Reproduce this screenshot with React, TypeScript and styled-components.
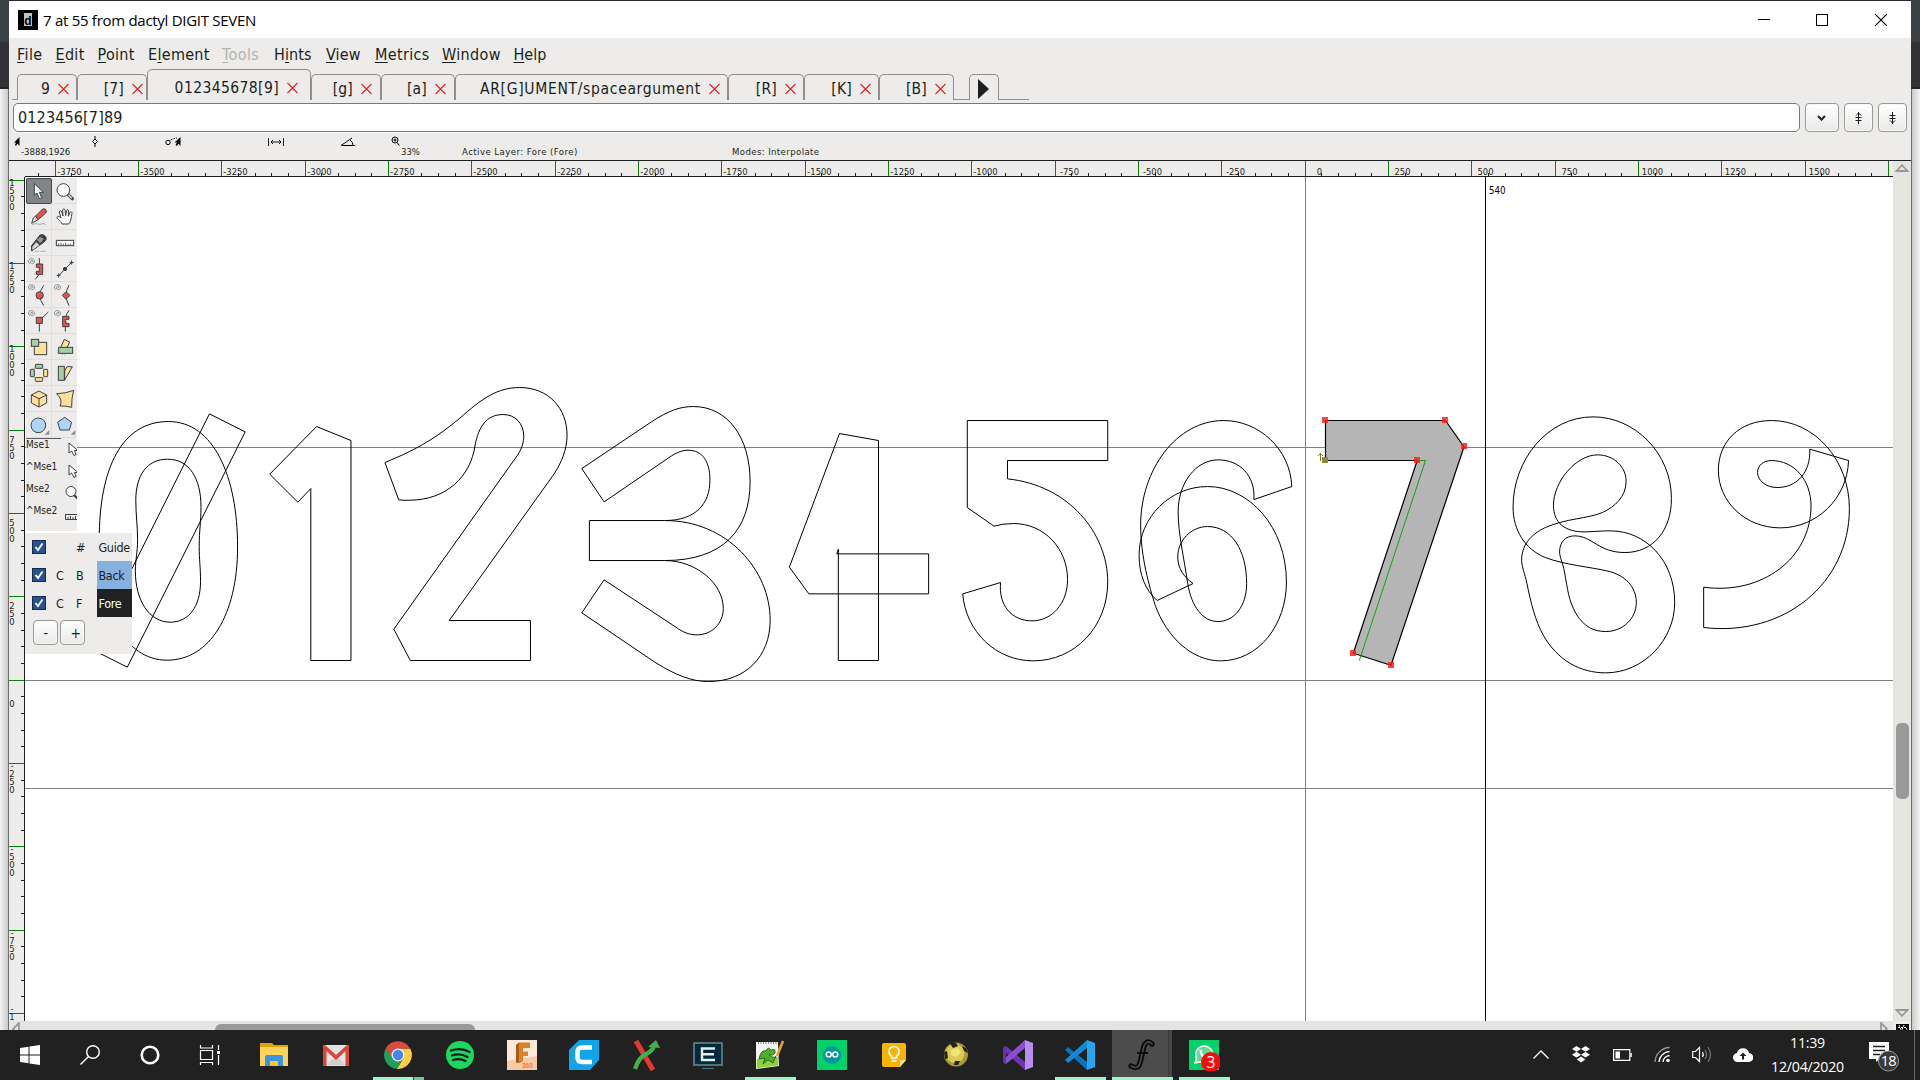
import React from "react";
import styled, { createGlobalStyle, css } from "styled-components";

const UI = `"DejaVu Sans Condensed", "DejaVu Sans", sans-serif`;
const SEGOE = `"Open Sans", "Noto Sans", sans-serif`;

const Global = createGlobalStyle`
  * { box-sizing: border-box; }
  body { margin: 0; background: #202020; overflow: hidden; }
  svg { display: block; flex: none; }
`;

const Screen = styled.div`
  width: 1920px; height: 1080px; display: flex; flex-direction: column;
  font-family: ${UI}; font-stretch: condensed; color: #1c1f20; overflow: hidden;
`;
const Desktop = styled.div`
  height: 1030px; display: grid; grid-template-columns: 9px 1902px 9px;
`;
const Behind = styled.div<{ $side: "left" | "right" }>`
  background:
    linear-gradient(#3b4043 0 42px, #323236 42px 87px, #252529 87px 89px, transparent 89px),
    linear-gradient(to ${(p) => p.$side}, #6d6d6d 0 1px, #c9c9c9 1px, #efefef 8px);
`;
const Window = styled.div`
  display: flex; flex-direction: column; background: #edecea; border-top: 1px solid #2b2b2f; min-width: 0;
`;
const TitleBar = styled.div`
  height: 37px; flex: none; background: #fff; display: flex; align-items: center; padding-left: 9px;
`;
const TitleText = styled.div`
  flex: 1; font: 15px ${SEGOE}; font-stretch: normal; letter-spacing: -0.28px; color: #000; padding-left: 5px; white-space: pre;
`;
const WinButton = styled.div<{ $w: number }>`
  width: ${(p) => p.$w}px; height: 37px; display: flex; align-items: center; justify-content: center;
`;
const MenuBar = styled.div`
  height: 31px; flex: none; display: grid; padding-left: 8px; align-items: center;
  grid-template-columns: 38.5px 42px 50.5px 74px 52px 52px 49px 67px 71.5px 50px;
  font-size: 16px;
`;
const MenuItem = styled.div<{ $ls: number; $off?: boolean }>`
  letter-spacing: ${(p) => p.$ls}px; color: ${(p) => (p.$off ? "#b3b3b1" : "#1c1f20")}; white-space: nowrap; line-height: 20px;
  padding-top: 2px;
  u { text-underline-offset: 2px; text-decoration-thickness: 1px; }
`;
const TabStrip = styled.div`
  height: 31px; flex: none; display: flex; align-items: flex-end; padding-left: 3px;
`;
const Baseline = styled.div<{ $w: number }>`
  width: ${(p) => p.$w}px; height: 1px; background: #8f8f8b;
`;
const Tab = styled.div<{ $w: number; $active?: boolean; $pad?: number }>`
  width: ${(p) => p.$w}px; height: ${(p) => (p.$active ? 31 : 26)}px;
  display: flex; align-items: center; justify-content: flex-end; gap: 8px;
  padding: ${(p) => (p.$active ? 6 : 2)}px ${(p) => p.$pad ?? 7}px 0 0;
  border: 1px solid #8f8f8b; border-bottom: 0; border-radius: 5px 5px 0 0;
  font-size: 15.5px; white-space: nowrap;
`;
const TabLabel = styled.span<{ $ls?: number }>`letter-spacing: ${(p) => p.$ls ?? 0.2}px;`;
const EntryRow = styled.div`
  height: 35px; flex: none; display: flex; align-items: flex-start; padding: 3px 0 0 4px;
`;
const Entry = styled.div`
  width: 1787px; height: 29px; background: #fff; border: 1px solid #76787a; border-radius: 5px;
  padding: 0 0 1px 4px; font-size: 16px; letter-spacing: .14px; line-height: 27px; box-shadow: 0 1px 0 #fbfbfa;
`;
const bevel = css`
  border: 1px solid #9a9a97; border-radius: 4px; background: linear-gradient(#ffffff, #e9e9e8);
  box-shadow: inset 0 0 0 1px #f8f8f8;
  display: flex; align-items: center; justify-content: center;
`;
const EntryButton = styled.div<{ $w: number }>`
  ${bevel} width: ${(p) => p.$w}px; height: 29px; margin-left: 5px; padding-right: 1px;
`;
const InfoBar = styled.div`
  height: 25px; flex: none; display: grid; align-items: start;
  grid-template-columns: 79px 73px 103px 72px 51px 71px 270px 1fr;
  padding-left: 4px; font-size: 9.5px;
`;
const InfoCell = styled.div<{ $x?: number; $ls?: number }>`
  height: 25px; display: flex; align-items: flex-start;
  letter-spacing: ${(p) => p.$ls ?? 0}px; white-space: nowrap;
  span { margin-left: ${(p) => p.$x ?? 0}px; padding-top: 11px; line-height: 12px; }
`;
const Work = styled.div`
  flex: 1; min-height: 0; display: grid; grid-template-columns: 1884px 18px; grid-template-rows: 861px 9px;
`;
const Editor = styled.div`
  display: grid; grid-template-columns: 16px 1868px; grid-template-rows: 17px 844px; position: relative;
`;
const TopRuler = styled.div`grid-column: 1 / 3;`;
const CanvasArea = styled.div`background: #fff;`;
const VScroll = styled.div`
  background: #e4e4e0; display: flex; flex-direction: column; align-items: center; padding: 3px 0 3px;
  border-top: 1px solid #1c1f20;
`;
const Spacer = styled.div<{ $h: number }>`height: ${(p) => p.$h}px; flex: none;`;
const VThumb = styled.div`width: 13px; height: 76px; border-radius: 5px; background: #999a97; flex: none;`;
const HScroll = styled.div`
  background: #e4e4e0; display: flex; justify-content: space-between; overflow: hidden; padding: 1px 5px 0 3px;
`;
const HThumb = styled.div`
  width: 260px; height: 15px; border-radius: 6px; background: #999a97; margin: 2px auto 0 195px;
`;
const Corner = styled.div`display: flex; justify-content: center; padding-top: 3px; overflow: hidden;`;

const Toolbox = styled.div`
  position: absolute; left: 17px; top: 18px; width: 51px; height: 353px; background: #edecea; overflow: hidden;
`;
const ToolGrid = styled.div`
  display: grid; grid-template-columns: 26px 26px; grid-auto-rows: 26px; width: 52px;
`;
const ToolCell = styled.div<{ $on?: boolean }>`
  border-right: 1px solid #dededc; border-bottom: 1px solid #dededc;
  ${(p) => p.$on && css`background: #808588; border: 1px solid #45494b; border-radius: 2px;`}
  svg { margin: ${(p) => (p.$on ? "-1px" : "0")}; }
`;
const Rule = styled.div`width: 35px; height: 1px; background: #5b5e60;`;
const MouseRow = styled.div`
  height: 22px; display: flex; justify-content: space-between; font-size: 10px; line-height: 12px;
  svg { margin: 3px 0 0; }
`;
const Layers = styled.div`
  position: absolute; left: 16px; top: 373px; width: 107px; height: 121px; background: #edecea;
  font-size: 12.5px; letter-spacing: -0.35px;
`;
const LayerRow = styled.div`
  height: 28px; display: grid; grid-template-columns: 7px 24px 20px 21px 35px; align-items: center; line-height: 17px;
  span { padding-top: 1px; }
`;
const Check = styled.div`
  width: 14px; height: 14px; background: #28518f; border: 1px solid #142c50;
`;
const LayerName = styled.div<{ $bg: string; $fg: string }>`
  height: 28px; line-height: 29px; padding-left: 1.5px; background: ${(p) => p.$bg}; color: ${(p) => p.$fg};
`;
const LayerButtons = styled.div`display: flex; gap: 2px; padding: 3px 0 0 8px;`;
const SmallButton = styled.div<{ $dx?: number }>`${bevel} width: 25px; height: 25px; font-size: 14px; padding-left: ${(p) => p.$dx ?? 0}px;`;

const Taskbar = styled.div`
  height: 50px; background: #212121; display: flex; font-family: ${SEGOE}; font-stretch: normal; color: #fff;
`;
const Slot = styled.div<{ $w: number }>`
  width: ${(p) => p.$w}px; height: 50px; flex: none; display: grid; place-items: center; grid-template-rows: 49px;
`;
const AppSlot = styled.div<{ $state?: "open" | "group" | "active" }>`
  width: 62px; height: 50px; flex: none; display: grid; grid-template-rows: 47px 3px; justify-items: center;
  background: ${(p) =>
    p.$state === "active"
      ? "linear-gradient(90deg, transparent 1px, #4c4c4c 1px 57px, #3a3a3a 57px 58px, #474747 58px 61px, transparent 61px)"
      : "none"};
  & > svg { margin-top: 9px; }
  &::after {
    content: ""; height: 3px; width: ${(p) => (p.$state === "active" ? 61 : 51)}px;
    background: ${(p) =>
      !p.$state ? "none" : p.$state === "group" ? "linear-gradient(90deg, #9ff5cb 40px, #2f5a46 40px 41px, #7fbf9f 41px)" : "#9ff5cb"};
  }
`;
const Tray = styled.div`margin-left: auto; display: flex; height: 50px;`;
const Clock = styled.div`
  width: 92px; display: flex; flex-direction: column; align-items: center; font-size: 14.2px; line-height: 24px;
  letter-spacing: -0.25px; padding: 1px 0 0 7px; white-space: nowrap;
`;
const ShowDesktop = styled.div`width: 6px; border-left: 1px solid #6a6a6a;`;

/* ---------- rulers ---------- */
const SCALE = 1 / 3;
const ORIGIN_X = 1305.3;
const ORIGIN_Y = 680.3;

function HorizontalRuler() {
  const out: React.ReactNode[] = [];
  for (let u = -3850; u <= 1750; u += 50) {
    const x = Math.floor(ORIGIN_X + u * SCALE) + 0.5;
    if (x < 25 || x > 1893) continue;
    const major = u % 250 === 0;
    out.push(<line key={u} x1={x} x2={x} y1={major ? 161 : 173} y2={176} stroke={major ? "#0a820a" : "#1c1f20"} />);
    if (major && u < 1750)
      out.push(
        <text key={"t" + u} x={x + 14} y={175} textAnchor="middle" fontSize="9.3" fill="#1c1f20">{u}</text>
      );
  }
  return (
    <svg width="1884" height="17" viewBox="9 160 1884 17">
      <path d="M9 160.5H1893M25 176.5H1893" stroke="#1c1f20" />
      {out}
    </svg>
  );
}

function VerticalRuler() {
  const out: React.ReactNode[] = [];
  for (let u = 1500; u >= -1000; u -= 50) {
    const y = Math.floor(ORIGIN_Y - u * SCALE) + 0.5;
    const major = u % 250 === 0;
    out.push(<line key={u} x1={major ? 9 : 21} x2={24} y1={y} y2={y} stroke={major ? "#0a820a" : "#1c1f20"} />);
    if (major) {
      const chars = String(u).split("");
      const first = y + 2 + (4 - chars.length) * 7;
      chars.forEach((c, i) => {
        const baseline = first + i * 8 + 3.3;
        if (baseline > 1021) return;
        out.push(
          <text key={u + "-" + i} x={12} y={baseline} textAnchor="middle" fontSize="9.4" fill="#1c1f20">{c}</text>
        );
      });
    }
  }
  return (
    <svg width="16" height="844" viewBox="9 177 16 844">
      {out}
      <path d="M24.5 177V1021" stroke="#1c1f20" />
    </svg>
  );
}

/* ---------- glyph outlines ---------- */
const GROUPS = [
  {
    at: "translate(80 370.2) scale(.44643 .33333)",
    paths: [
      "M198 154C300 154 353 320 353 530C353 735 290 870 195 870C100 870 43 720 43 510C43 290 95 154 198 154Z",
      "M196 267C245 267 271 325 271 410C271 460 267 480 267 528C267 570 270 590 270 633C270 710 243 756 202 756C155 756 124 690 124 603C124 565 129 550 129 508C129 465 125 435 125 390C125 315 150 267 196 267Z",
      "M290 131L370 185L106 891L26 837Z",
      "M530 169L607 211V871H517V355L488 396L425 312Z",
      "M683 277C760 235 800 200 850 145C900 85 935 52 985 52C1050 52 1091 115 1091 195C1091 235 1080 275 1060 315L827 751H1009V871H740L703 777L980 255C990 235 994 215 994 198C994 160 975 133 948 133C910 133 893 170 885 225C875 320 820 390 738 390Q725 391 714 389Z",
      "M1124 295L1280 155C1320 120 1345 109 1374 109C1450 109 1501 200 1501 335C1501 480 1440 571 1310 571H1141V451H1310C1380 451 1411 400 1411 330C1411 275 1395 240 1362 240C1350 240 1340 245 1325 257L1174 395Z",
      "M1310 451C1450 451 1546 600 1546 750C1546 860 1490 934 1408 934C1370 934 1335 915 1290 878L1124 728L1174 629L1335 771C1350 786 1365 794 1382 794C1415 794 1441 760 1441 715C1441 640 1380 571 1310 571",
    ],
  },
  {
    at: "translate(740 370.2) scale(.38265 .33333)",
    paths: [
      "M260 190L362 211V871H257V537L253 551H493V671H180L129 591Z",
      "M594 151H961V271H699V326C860 345 961 490 961 635C961 770 875 872 766 872C670 872 590 785 582 671L681 637C675 705 710 752 763 752C815 752 856 700 856 628C856 535 795 460 715 460Q685 460 664 468L594 412Z",
      "M1442 349C1438 235 1355 151 1264 151C1140 151 1047 300 1047 465C1047 560 1070 650 1085 705C1115 800 1180 872 1256 872C1355 872 1428 765 1428 635C1428 470 1330 349 1222 349C1125 349 1043 440 1043 555C1043 615 1060 660 1090 691L1184 640C1160 620 1144 595 1144 560C1144 510 1180 469 1222 469C1285 469 1324 540 1324 640C1324 710 1290 754 1249 754C1210 754 1180 710 1170 640C1160 560 1145 490 1145 425C1145 340 1190 269 1250 269C1305 269 1347 315 1343 388Z",
    ],
  },
  {
    at: "translate(1280 370.2) scale(.40816 .33333)",
    paths: [
      "M767 140C870 140 959 250 959 385C959 480 915 547 845 547C780 547 765 497 722 497C700 497 685 515 685 545C685 560 692 575 697 605C705 660 707 690 725 730C745 770 768 784 798 784C840 784 873 745 873 697C873 650 845 613 800 602C760 590 700 585 650 562C600 537 571 480 571 410C571 270 655 140 767 140Z",
      "M778 254C818 254 848 290 848 333C848 380 820 410 790 427C755 445 700 445 650 472C610 495 592 530 592 570C592 590 600 610 605 640C615 700 625 750 645 795C680 870 735 908 798 908C890 908 967 810 967 697C967 570 895 482 810 482C780 482 765 485 745 485C700 485 670 460 670 405C670 335 725 254 778 254Z",
      "M1038 651C1180 675 1301 565 1301 407C1301 330 1260 271 1204 271C1183 271 1170 287 1170 307C1170 330 1190 352 1218 352C1265 352 1300 310 1298 237L1393 271C1390 385 1315 473 1226 473C1140 473 1074 395 1074 300C1074 215 1125 151 1204 151C1310 151 1395 270 1395 415C1395 640 1235 800 1038 772Z",
    ],
  },
];
const POINTS = [[1325, 420], [1445, 420], [1464, 446], [1417, 460], [1353, 653], [1391, 665]];

function Outlines() {
  return (
    <svg width="1868" height="844" viewBox="25 177 1868 844">
      <path d="M25 447.5H1893M25 680.5H1893M25 788.5H1893M1305.5 177V1021" stroke="#808080" />
      <path d="M1485.5 177V1021" stroke="#000" />
      <text x="1489" y="194" fontSize="9.6" fill="#000">540</text>
      {GROUPS.map((g) => (
        <g key={g.at} transform={g.at} fill="none" stroke="#000">
          {g.paths.map((d) => <path key={d} d={d} vectorEffect="non-scaling-stroke" strokeWidth="1" />)}
        </g>
      ))}
      <path d="M1325.5 420.5H1445.5L1464 446.8L1391 665.2L1353.3 653.2L1417.2 460.5H1325.5Z" fill="#b5b5b5" stroke="#000" strokeWidth="1.2" />
      <path d="M1417 460.5H1425.5L1359.3 660.5" fill="none" stroke="#12a012" />
      {POINTS.map(([x, y]) => <rect key={x + "," + y} x={x - 3} y={y - 3} width="6" height="6" fill="#ff1a1a" fillOpacity=".82" />)}
      <rect x="1322" y="457" width="6" height="6" fill="#8c8c3c" />
      <path d="M1320.5 461V453.5M1318 456L1320.5 453.5L1323 456" fill="none" stroke="#80801a" />
    </svg>
  );
}

/* ---------- tool icons, drawn on a 78 unit cell ---------- */
const INK = "#3d4143";
const RED = "#e25252";
const GREEN = "#a6cfa3";
const YELLOW = "#ffe09a";
const BLUE = "#aed5f7";
const Spiral = () => <path d="M11 23C4 17 8 7 17 8C27 9 29 21 20 23C11 24 11 13 18 13C23 14 21 19 17 18" fill="none" stroke="#7d8284" strokeWidth="2.6" />;
const More = () => <path d="M70 54V68H56Z" fill="#8a8f91" stroke="none" />;

const TOOLS: React.ReactNode[] = [
  <path d="M25 17V52L33 45L40 62L47 59L40 43H52Z" fill="#fff" />,
  <><path d="M48 49L61 62" stroke={INK} strokeWidth="10" strokeLinecap="round" /><path d="M49 50L60 61" stroke="#c5cac7" strokeWidth="5" /><circle cx="34" cy="36" r="19" fill="#fff" /></>,
  <><path d="M29 36L50 15Q58 12 61 20Q62 24 59 27L36 47Z" fill={RED} /><path d="M29 36L36 47L17 58L22 42Z" fill="#dcdedc" /><path d="M18 64C25 54 40 64 46 60C53 57 58 60 60 64" fill="none" stroke="#858a8c" strokeWidth="2" /></>,
  <path d="M30 60C26 48 13 45 15 39C18 34 25 40 27 42L22 24C22 19 28 19 29 24L33 36L32 18C33 14 38 14 39 18L41 35L44 19C46 15 50 17 50 21L49 37L54 25C57 22 61 24 60 28C57 40 58 52 50 60Z" fill="#fff" />,
  <><path d="M17 63L16 48L42 15Q54 10 60 22Q62 30 57 34Z" fill="#3b4042" /><path d="M19 60L19 50L31 36L40 46Z" fill="#d6d8d7" stroke="none" /><path d="M34 29L44 22L52 28L42 38Z" fill="#8e9496" stroke="#fff" strokeWidth="2" strokeDasharray="3 3" /><path d="M28 64H38M43 64H60" stroke="#858a8c" strokeWidth="2" /></>,
  <><rect x="13" y="31" width="52" height="16" fill="#fff" /><path d="M20 46V41M27 46V38M34 46V41M41 46V38M48 46V41M55 46V41" strokeWidth="2.5" /></>,
  <><Spiral /><path d="M40 6V26M38 57L28 70" /><path d="M31 24H50V55H31V46H40V34H31Z" fill={RED} /></>,
  <><path d="M20 59L59 19M14 58H26M20 52V65M53 20H65M59 13V26" /><circle cx="39" cy="39" r="5" fill={INK} /></>,
  <><Spiral /><path d="M53 10Q41 28 41 40Q42 55 53 71" fill="none" /><circle cx="41" cy="40" r="11" fill={RED} /></>,
  <><Spiral /><path d="M51 10Q42 25 42 40Q42 55 51 71" fill="none" /><path d="M42 29L54 40L42 52L31 40Z" fill={RED} /></>,
  <><Spiral /><path d="M48 30L67 12M40 46V71" /><rect x="31" y="28" width="18" height="18" fill={RED} /></>,
  <><Spiral /><path d="M51 7Q44 16 42 25M40 56V71" fill="none" /><path d="M32 25H51V34H41V46H51V56H32Z" fill={RED} /></>,
  <><rect x="25" y="25" width="37" height="37" fill={YELLOW} /><rect x="16" y="16" width="22" height="21" fill={GREEN} /></>,
  <><path d="M37 16L53 24L45 41H26Z" fill={YELLOW} /><rect x="20" y="40" width="42" height="18" fill={GREEN} /><path d="M22 38Q15 50 17 60M30 61L40 64" fill="none" strokeWidth="2" strokeDasharray="3 3" stroke="#858a8c" /></>,
  <><circle cx="39" cy="39" r="19" fill="none" strokeWidth="2" strokeDasharray="3 3" /><rect x="28" y="13" width="22" height="12" fill={GREEN} rx="2" /><rect x="13" y="28" width="12" height="22" fill={GREEN} rx="2" /><rect x="53" y="28" width="12" height="22" fill={YELLOW} rx="2" /><rect x="28" y="53" width="22" height="11" fill={YELLOW} rx="2" /></>,
  <><path d="M45 20H61L38 60V33Z" fill={YELLOW} /><rect x="19" y="19" width="18" height="42" fill={GREEN} /></>,
  <><path d="M39 15L62 27V51L39 63L16 51V27Z" fill={YELLOW} /><path d="M16 27L39 38L62 27M39 38V63" fill="none" /></>,
  <path d="M14 23Q40 23 65 13Q58 38 59 64Q40 59 24 60Q34 42 14 23Z" fill={YELLOW} />,
  <><circle cx="37" cy="40" r="22" fill={BLUE} /><More /></>,
  <><path d="M38 16L59 31L52 54H24L17 31Z" fill={BLUE} /><More /></>,
];

const MiniArrow = () => (
  <svg width="9" height="15" viewBox="0 0 9 15"><path d="M1 1V11L3.5 9L6 13.5L8 12.5L6.5 8.5H10Z" fill="#fff" stroke={INK} strokeWidth="1" /></svg>
);
const MICE: [string, React.ReactNode][] = [
  ["Mse1", <MiniArrow />],
  ["^Mse1", <MiniArrow />],
  ["Mse2", <svg width="12" height="15" viewBox="0 0 12 15"><circle cx="6" cy="5.5" r="5" fill="#fff" stroke={INK} /><path d="M9 9L13 13" stroke={INK} strokeWidth="2" /></svg>],
  ["^Mse2", <svg width="12" height="15" viewBox="0 0 12 15"><path d="M14 6.5H.5V11.5H14M3 11V9M5.5 11V8M8 11V9M10.5 11V8" fill="none" stroke={INK} /></svg>],
];

/* ---------- chrome data ---------- */
const MENUS: { pre?: string; u: string; post: string; ls: number; off?: boolean }[] = [
  { u: "F", post: "ile", ls: 0.4 },
  { u: "E", post: "dit", ls: 0.3 },
  { u: "P", post: "oint", ls: 0.3 },
  { pre: "E", u: "l", post: "ement", ls: 0.3 },
  { u: "T", post: "ools", ls: 0.4, off: true },
  { pre: "H", u: "i", post: "nts", ls: 0.1 },
  { u: "V", post: "iew", ls: 0.1 },
  { u: "M", post: "etrics", ls: 0.35 },
  { u: "W", post: "indow", ls: 0.35 },
  { u: "H", post: "elp", ls: 0 },
];
const TABS: { t: string; w: number; active?: boolean; ls?: number; pad?: number }[] = [
  { t: "9", w: 60 }, { t: "[7]", w: 70, pad: 3 }, { t: "012345678[9]", w: 164, active: true, ls: 0.4, pad: 12 },
  { t: "[g]", w: 70, pad: 8 }, { t: "[a]", w: 74, pad: 8 }, { t: "AR[G]UMENT/spaceargument", w: 273, ls: 0.68 },
  { t: "[R]", w: 76 }, { t: "[K]", w: 75 }, { t: "[B]", w: 75 },
];
const LAYERS = [
  { c: "", k: "#", n: "Guide", bg: "transparent", fg: "#1c1f20" },
  { c: "C", k: "B", n: "Back", bg: "#86b0de", fg: "#1c1f20" },
  { c: "C", k: "F", n: "Fore", bg: "#202122", fg: "#fff" },
];

const Cross = () => (
  <svg width="11" height="12" viewBox="0 0 11 12"><path d="M.5 1L10.5 11M10.5 1L.5 11" stroke="#f02020" strokeWidth="1.1" /></svg>
);

/* ---------- taskbar icons, 32x32 ---------- */
const APPS: { s?: "open" | "group" | "active"; icon: React.ReactNode }[] = [
  { icon: <><path d="M2 4H14L16 6H30V8H2Z" fill="#e8a000" /><path d="M2 8H30V27H2Z" fill="#ffd35c" /><path d="M7 27V18Q7 16 9 16H23Q25 16 25 18V27H20V22H12V27Z" fill="#3d95e0" /><path d="M12 22H20V27H12Z" fill="#ffc62c" /></> },
  { icon: <><rect x="3" y="6" width="26" height="21" rx="2" fill="#e4e4e4" /><path d="M6 26L16 17L26 26Z" fill="#cfcfcf" /><path d="M3 27V8Q3 6 5 6L16 16L27 6Q29 6 29 8V27H25.500V12L16 21L6.500 12V27Z" fill="#dc4437" /></> },
  { s: "group", icon: <><path d="M3.900 9A14 14 0 0 0 15 30L21 19L11 19Z" fill="#1e9f5a" /><path d="M15 30A14 14 0 0 0 28.200 9.500H16L21.500 19Z" fill="#ffce44" /><path d="M3.900 9A14 14 0 0 1 28.200 9.500H16L10 19Z" fill="#dc4a3c" /><circle cx="16" cy="16" r="6.500" fill="#f4f4f4" /><circle cx="16" cy="16" r="5.200" fill="#4587f0" /></> },
  { icon: <><circle cx="16" cy="16" r="14" fill="#1ed760" /><path d="M7 11.500Q17 8 25.500 13M8 16.500Q16 13.800 23.500 18M9 21Q16 19 21.500 22" fill="none" stroke="#18201b" strokeWidth="2.300" strokeLinecap="round" /></> },
  { icon: <><rect x="1" y="1" width="30" height="30" fill="#fbeadb" /><path d="M1 22L31 17V31H1Z" fill="#f6cba5" /><path d="M10 6L13 3.500H24V9H17V12.500H22V17H17V22L14 24H10Z" fill="#d9822b" /><path d="M10 6L13 3.500V23L10 24Z" fill="#a95c18" /><text x="16" y="28.500" fontSize="6.500" fontWeight="700" fill="#e8862e" fontFamily="Liberation Sans">360</text></> },
  { icon: <><path d="M11 1H31V21L22 31H1V11Z" fill="#0fa5e6" /><path d="M24 8.500H14Q9.500 8.500 9.500 13V18.500Q9.500 23 14 23H24" fill="none" stroke="#fff" strokeWidth="4.500" /></> },
  { icon: <><path d="M6 2L23 31" stroke="#e23a2e" strokeWidth="5" /><path d="M5 30Q9 18 16 15T24 6" fill="none" stroke="#43b04a" strokeWidth="4.500" /><path d="M18 8L26 1L30 9Z" fill="#43b04a" /></> },
  { icon: <><rect x="2" y="4" width="28" height="22" fill="#022a3a" stroke="#6b8a93" strokeWidth="1.500" /><path d="M23 9.500H10V21H23M10 15.300H22" fill="none" stroke="#e8eef0" strokeWidth="2.400" /><path d="M10 29.500H22" stroke="#4b7384" /></> },
  { s: "open", icon: <><path d="M2 3H24L25 27L2 30Z" fill="#f4f4f0" /><path d="M3 20L24 18L24.500 26.500L2.500 29Z" fill="#8fd13a" /><path d="M5 20Q7 10 12 12Q14 7 17 11Q22 9 21 14Q19 17 15 16Q20 20 22 17L19 24L14 21L9 25L11 19Z" fill="#4fae2c" stroke="#21521a" strokeWidth=".8" /><path d="M4 4H23" stroke="#888" strokeWidth="2" strokeDasharray="1 1.500" /><path d="M29 2L23 17" stroke="#e8a325" strokeWidth="2.600" /></> },
  { icon: <><rect x="1" y="1" width="30" height="30" fill="#02d069" /><circle cx="16" cy="16" r="9" fill="#00979d" /><circle cx="12.700" cy="15.500" r="2.500" fill="none" stroke="#fff" strokeWidth="1.500" /><circle cx="19.300" cy="15.500" r="2.500" fill="none" stroke="#fff" strokeWidth="1.500" /></> },
  { icon: <><path d="M6 4H26Q28 4 28 6V21L22 28H6Q4 28 4 26V6Q4 4 6 4Z" fill="#f7b400" /><path d="M28 21L22 28V21Z" fill="#ffe08a" /><path d="M13.500 19V17Q11 15.500 11 12.500A5 5 0 0 1 21 12.500Q21 15.500 18.500 17V19ZM13.500 22H18.500" fill="none" stroke="#fff" strokeWidth="1.700" /></> },
  { icon: <><circle cx="16" cy="15.500" r="12" fill="#a89a35" /><circle cx="15" cy="14.500" r="9.500" fill="#d9ca52" /><path d="M10 4.500L15 3L18 7L13 9ZM22 7L26 9L28 14L24 12ZM4 13L7 12L8 19L5 20ZM15 22L20 22L18 26L14 26Z" fill="#23220f" /><path d="M11 11L18 9L21 14L16 18L11 16Z" fill="#f0e57a" /></> },
  { icon: <><path d="M23 1L31 4V28L23 31Z" fill="#b98cf0" /><path d="M1 9L4 7L23 23V31L1 11Z" fill="#6f35b5" /><path d="M1 23L4 25L23 9V1L1 21Z" fill="#8a4fd0" /><path d="M1 9L4 7V25L1 23Z" fill="#6630a8" /></> },
  { s: "open", icon: <><path d="M23 1L31 4V28L23 31Z" fill="#2aa5f2" /><path d="M1 11L4 8L23 23V31Z" fill="#0a75bd" /><path d="M1 21L4 24L23 9V1Z" fill="#1689d3" /></> },
  { s: "active", icon: <><path d="M26 5Q21 0 18 7L14 24Q12 31 5 27" fill="none" stroke="#0c0c0c" strokeWidth="5.400" strokeLinecap="round" /><path d="M26 5Q21 0 18 7L14 24Q12 31 5 27" fill="none" stroke="#4c4c4c" strokeWidth="1.600" strokeLinecap="round" /><path d="M11 14H22" stroke="#0c0c0c" strokeWidth="2" /></> },
  { s: "open", icon: <><rect x="1" y="1" width="30" height="30" fill="#02d069" /><path d="M7 24L8.500 19A8.500 8.500 0 1 1 12 22.800Z" fill="#5fdb92" stroke="#fff" strokeWidth="1.500" /><path d="M12.500 11Q13 19 20 19" fill="none" stroke="#fff" strokeWidth="2.400" /><circle cx="23" cy="23" r="10" fill="#f40d0d" /><text x="23" y="28.500" fontSize="15.500" fill="#fff" textAnchor="middle" fontFamily="Open Sans">3</text></> },
];

export default function App() {
  return (
    <Screen>
      <Global />
      <Desktop>
        <Behind $side="left" />
        <Window>
          <TitleBar>
            <svg width="20" height="20" viewBox="0 0 20 20">
              <rect width="20" height="20" fill="#000" /><rect x="6" y="3" width="8" height="13" fill="#c4c4c4" />
              <text x="6.200" y="15" fontSize="12" fontWeight="700" fill="#000" fontFamily="Liberation Sans">d</text>
            </svg>
            <TitleText>7 at 55 from dactyl DIGIT SEVEN</TitleText>
            <WinButton $w={58}><svg width="12" height="12"><path d="M0 5.500H12" stroke="#000" /></svg></WinButton>
            <WinButton $w={58}><svg width="12" height="12"><rect x=".5" y=".5" width="11" height="11" fill="none" stroke="#000" /></svg></WinButton>
            <WinButton $w={60}><svg width="12" height="12"><path d="M0 0L12 12M12 0L0 12" stroke="#000" strokeWidth="1.100" /></svg></WinButton>
          </TitleBar>
          <MenuBar>
            {MENUS.map((m) => (
              <MenuItem key={m.u + m.post} $ls={m.ls} $off={m.off}>{m.pre}<u>{m.u}</u>{m.post}</MenuItem>
            ))}
          </MenuBar>
          <TabStrip>
            <Baseline $w={5} />
            {TABS.map((t) => (
              <Tab key={t.t} $w={t.w} $active={t.active} $pad={t.pad}><TabLabel $ls={t.ls}>{t.t}</TabLabel><Cross /></Tab>
            ))}
            <Baseline $w={15} />
            <Tab $w={30} $pad={9}><svg width="11" height="20" viewBox="0 0 11 20"><path d="M0 0L11 10L0 20Z" fill="#1c1f20" /></svg></Tab>
            <Baseline $w={30} />
          </TabStrip>
          <EntryRow>
            <Entry>0123456[7]89</Entry>
            <EntryButton $w={34}><svg width="9" height="6" viewBox="0 0 9 6"><path d="M1 1L4.500 4.500L8 1" fill="none" stroke="#1e2b33" strokeWidth="2.200" /></svg></EntryButton>
            <EntryButton $w={29}><svg width="7" height="12" viewBox="0 0 7 12"><path d="M3.500 0V12M1 3.500L3.500 1L6 3.500M.5 5.500H6.500M.5 8.500H6.500" fill="none" stroke="#1c1f20" /></svg></EntryButton>
            <EntryButton $w={29}><svg width="7" height="12" viewBox="0 0 7 12"><path d="M3.500 0V12M1 8.500L3.500 11L6 8.500M.5 3.500H6.500M.5 6.500H6.500" fill="none" stroke="#1c1f20" /></svg></EntryButton>
          </EntryRow>
          <InfoBar>
            <InfoCell $x={0}>
              <svg width="8" height="12" viewBox="0 0 8 12"><path d="M6.500 2V11L4.500 8.500L3 11L2 10L3 7.500H1Z" fill="#000" /></svg>
              <span>-3888,1926</span>
            </InfoCell>
            <InfoCell><svg width="6" height="12" viewBox="0 0 6 12"><path d="M3 1V4M3 9V12M.5 6.500L3 4L5.500 6.500L3 9Z" fill="none" stroke="#000" /></svg></InfoCell>
            <InfoCell><svg width="17" height="12" viewBox="0 0 17 12"><circle cx="3" cy="7.500" r="2.200" fill="none" stroke="#000" /><path d="M5.500 5L9 3.500L12 3" fill="none" stroke="#000" strokeDasharray="2 1" /><path d="M15.500 2V11L13.500 8.500L12 11L10.500 10L12 7.500H9.500Z" /></svg></InfoCell>
            <InfoCell><svg width="16" height="12" viewBox="0 0 16 12"><path d="M.5 3V11M15.500 3V11M3 7H13M5 5L3 7L5 9M11 5L13 7L11 9" fill="none" stroke="#000" strokeWidth=".9" /></svg></InfoCell>
            <InfoCell><svg width="16" height="12" viewBox="0 0 16 12"><path d="M1 10.500H15M1 10.500L12 3M10 5Q13 7 13 10" fill="none" stroke="#000" /></svg></InfoCell>
            <InfoCell $x={1}>
              <svg width="9" height="12" viewBox="0 0 9 12"><circle cx="4" cy="5" r="3" fill="none" stroke="#000" /><path d="M6 7.500L8.500 10.500M2.500 5H5.500M4 3.500V6.500" stroke="#000" /></svg>
              <span>33%</span>
            </InfoCell>
            <InfoCell $ls={0.45}><span>Active Layer: Fore (Fore)</span></InfoCell>
            <InfoCell $ls={0.4}><span>Modes: Interpolate</span></InfoCell>
          </InfoBar>
          <Work>
            <Editor>
              <TopRuler><HorizontalRuler /></TopRuler>
              <VerticalRuler />
              <CanvasArea><Outlines /></CanvasArea>
              <Toolbox>
                <ToolGrid>
                  {TOOLS.map((icon, i) => (
                    <ToolCell key={i} $on={i === 0}>
                      <svg width="26" height="26" viewBox="0 0 78 78" stroke={INK} strokeWidth="3">{icon}</svg>
                    </ToolCell>
                  ))}
                </ToolGrid>
                <Rule />
                {MICE.map(([label, icon]) => <MouseRow key={label}><span>{label}</span>{icon}</MouseRow>)}
              </Toolbox>
              <Layers>
                {LAYERS.map((l) => (
                  <LayerRow key={l.n}>
                    <i />
                    <Check><svg width="12" height="12" viewBox="0 0 12 12"><path d="M2.500 6L5 9L9.500 2.500" fill="none" stroke="#fff" strokeWidth="1.900" /></svg></Check>
                    <span>{l.c}</span><span>{l.k}</span>
                    <LayerName $bg={l.bg} $fg={l.fg}>{l.n}</LayerName>
                  </LayerRow>
                ))}
                <LayerButtons><SmallButton>-</SmallButton><SmallButton $dx={6}>+</SmallButton></LayerButtons>
              </Layers>
            </Editor>
            <VScroll>
              <svg width="14" height="8" viewBox="0 0 14 8"><path d="M1.500 7L7 1.200L12.500 7Z" fill="none" stroke="#999a97" strokeWidth="1.800" /></svg>
              <Spacer $h={551} />
              <VThumb />
              <Spacer $h={210} />
              <svg width="14" height="8" viewBox="0 0 14 8"><path d="M1.500 1L7 6.800L12.500 1Z" fill="none" stroke="#999a97" strokeWidth="1.800" /></svg>
            </VScroll>
            <HScroll>
              <svg width="8" height="14" viewBox="0 0 8 14"><path d="M7 1L1 7L7 13Z" fill="none" stroke="#999a97" strokeWidth="1.800" /></svg>
              <HThumb />
              <svg width="8" height="14" viewBox="0 0 8 14"><path d="M1 1L7 7L1 13Z" fill="none" stroke="#999a97" strokeWidth="1.800" /></svg>
            </HScroll>
            <Corner>
              <svg width="13" height="13" viewBox="0 0 13 13"><rect width="13" height="13" fill="#000" /><path d="M2 3.500H11M3 1L5 6M8 1L6 6M10 4L11 6" stroke="#fff" strokeDasharray="2 1" /></svg>
            </Corner>
          </Work>
        </Window>
        <Behind $side="right" />
      </Desktop>
      <Taskbar>
        <Slot $w={60}><svg width="20" height="20" viewBox="0 0 20 20"><path d="M0 3L8.500 1.800V9.500H0ZM9.500 1.600L20 0V9.500H9.500ZM0 10.500H8.500V18.200L0 17ZM9.500 10.500H20V20L9.500 18.400Z" fill="#fff" /></svg></Slot>
        <Slot $w={60}><svg width="20" height="20" viewBox="0 0 20 20"><circle cx="13" cy="7" r="6.300" fill="none" stroke="#fff" strokeWidth="1.400" /><path d="M8.500 11.500L.5 19.500" stroke="#fff" strokeWidth="1.400" /></svg></Slot>
        <Slot $w={60}><svg width="20" height="20" viewBox="0 0 20 20"><circle cx="10" cy="10" r="8.300" fill="none" stroke="#fff" strokeWidth="2.600" /></svg></Slot>
        <Slot $w={63}><svg width="26" height="20" viewBox="0 0 26 20"><path d="M1.500 5.500H13.500V14.500H1.500ZM1.500 0V3H13.500V0M1.500 20V17.500H13.500V20M19.500 0V5M19.500 10V20" fill="none" stroke="#fff" strokeWidth="1.200" /><rect x="18" y="6" width="3" height="3" fill="#fff" /></svg></Slot>
        {APPS.map((a, i) => <AppSlot key={i} $state={a.s}><svg width="32" height="32" viewBox="0 0 32 32">{a.icon}</svg></AppSlot>)}
        <Tray>
          <Slot $w={48}><svg width="16" height="9" viewBox="0 0 16 9"><path d="M.5 8.500L8 1L15.500 8.500" fill="none" stroke="#fff" strokeWidth="1.300" /></svg></Slot>
          <Slot $w={32}><svg width="18" height="17" viewBox="0 0 18 17"><path d="M4.500 0L9 2.900L4.500 5.800L0 2.900ZM13.500 0L18 2.900L13.500 5.800L9 2.900ZM4.500 5.800L9 8.700L4.500 11.600L0 8.700ZM13.500 5.800L18 8.700L13.500 11.600L9 8.700ZM9 10.600L13.300 13.500L9 16.500L4.700 13.500Z" fill="#fff" /></svg></Slot>
          <Slot $w={50}><svg width="19" height="12" viewBox="0 0 19 12"><path d="M.6.600H16.800V11.400H.6ZM18.200 4V8" fill="none" stroke="#fff" strokeWidth="1.200" /><rect x="2.500" y="2.500" width="4.500" height="7" fill="#fff" /></svg></Slot>
          <Slot $w={30}><svg width="17" height="17" viewBox="0 0 17 17"><circle cx="14" cy="14.500" r="1.800" fill="#fff" /><path d="M9 16A7 7 0 0 1 15.500 9.500M5 16A11 11 0 0 1 15.500 5.500" fill="none" stroke="#fff" strokeWidth="1.300" /><path d="M1 16A15 15 0 0 1 15.500 1.500" fill="none" stroke="#999" strokeWidth="1.300" /></svg></Slot>
          <Slot $w={50}><svg width="20" height="17" viewBox="0 0 20 17"><path d="M.7 5.500H3.500L7.500 1.500V15.500L3.500 11.500H.7ZM10.500 6Q12 8.500 10.500 11" fill="none" stroke="#fff" strokeWidth="1.200" /><path d="M13 4Q16 8.500 13 13M16 1Q21 8.500 16 16" fill="none" stroke="#777" strokeWidth="1.200" /></svg></Slot>
          <Slot $w={31}><svg width="20" height="14" viewBox="0 0 20 14"><path d="M5 14A4.500 4.500 0 0 1 4 5A6.200 6.200 0 0 1 16 5A4.500 4.500 0 0 1 15.500 14Z" fill="#fff" /><path d="M10 4.500L6.500 8H9V11.500H11V8H13.500Z" fill="#212121" /></svg></Slot>
          <Clock><div>11:39</div><div>12/04/2020</div></Clock>
          <Slot $w={64}>
            <svg width="34" height="34" viewBox="0 0 34 34">
              <path d="M4 4H24V21H15L11 24V21H4Z" fill="#fff" /><path d="M8 8.500H20M8 12.500H20M8 16.500H15" stroke="#212121" strokeWidth="1.300" />
              <circle cx="23.500" cy="23" r="10" fill="#3a3a3a" stroke="#9a9a9a" />
              <text x="23.200" y="28.300" fontSize="14.500" fill="#fff" textAnchor="middle" fontFamily="Open Sans" letterSpacing="-.8">18</text>
            </svg>
          </Slot>
          <ShowDesktop />
        </Tray>
      </Taskbar>
    </Screen>
  );
}
